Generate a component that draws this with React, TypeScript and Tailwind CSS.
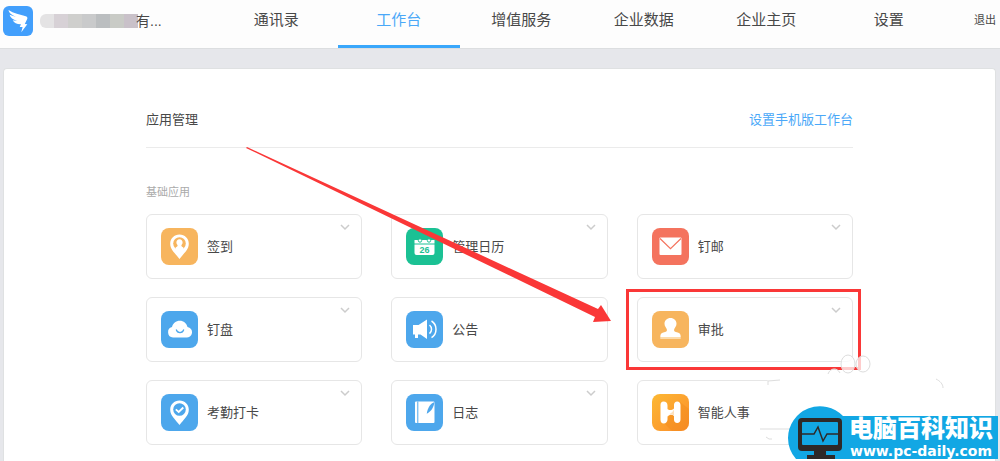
import React from "react";

interface AppItem {
  name: string;
  color: string;
  icon: React.ReactNode;
  highlighted?: boolean;
}

const PIN =
  "M18.5 6.5c-5.3 0-9.3 4-9.3 9.2 0 6 5.3 9.8 9.3 15.3 4-5.5 9.3-9.3 9.3-15.3 0-5.2-4-9.2-9.3-9.2z";

const CheckinIcon = () => (
  <>
    <path d={PIN} fill="#fff" />
    <circle cx="18.5" cy="15.5" r="6.3" fill="#f7b55e" />
    <path
      d="M18.5 11.2c-1.9 0-3.1 1.4-3.1 3.1 0 1.3.6 2.1 1.2 2.9.2 1.2-.8 1.6-2 2.3v3h7.8v-3c-1.2-.7-2.2-1.1-2-2.3.6-.8 1.2-1.6 1.2-2.9 0-1.7-1.2-3.1-3.1-3.1z"
      fill="#fff"
    />
  </>
);

const CalendarIcon = () => (
  <>
    <path d="M8.5 12h20v3.500h-20z" fill="#fff" />
    <path d="M8.5 16.500h20V25a2 2 0 0 1-2 2h-16a2 2 0 0 1-2-2z" fill="#fff" />
    <circle cx="14" cy="12.500" r="1.700" fill="#fff" stroke="#1bc194" />
    <circle cx="23" cy="12.500" r="1.700" fill="#fff" stroke="#1bc194" />
    <text
      x="18.5"
      y="24.5"
      textAnchor="middle"
      fontSize="9"
      fontWeight="700"
      fontFamily="Liberation Sans, sans-serif"
      fill="#1bc194"
    >
      26
    </text>
  </>
);

const MailIcon = () => (
  <>
    <rect x="7.5" y="9.5" width="22" height="17.5" rx="1" fill="#fff" />
    <path d="M8 10.5l10.5 10.2L29 10.5" fill="none" stroke="#f4735e" strokeWidth="1.2" />
  </>
);

const CloudIcon = () => (
  <>
    <path
      d="M12 26.5a5.3 5.3 0 0 1-1-10.4c.8-3.9 4-6.4 7.8-6.4s6.9 2.5 7.7 6.3A5.3 5.3 0 0 1 25 26.5z"
      fill="#fff"
    />
    <path
      d="M15.2 18.5c.6 2 1.9 3.1 3.800 3.100s3.200-1.100 3.800-3.100"
      fill="none"
      stroke="#4da7ec"
      strokeWidth="1.2"
    />
  </>
);

const NoticeIcon = () => (
  <>
    <path d="M7 14h5.5L21 8.5V28l-6.5-4.5H12V27H9v-3.5H7z" fill="#fff" />
    <path
      d="M23.5 14c2.7 2.3 2.7 6.3 0 8.6M25.5 10c6 3.6 6 13 0 16.6"
      fill="none"
      stroke="#fff"
      strokeWidth="1.5"
    />
  </>
);

const StampIcon = () => (
  <>
    <path
      d="M18.5 7c-3.500 0-6 2.500-6 5.800 0 2.500 1.700 3.700 2.300 5.400.7 2-.8 2.600-3.500 3.300-1.900.5-3 1.300-3 4.500h20.400c0-3.200-1.100-4-3-4.500-2.700-.7-4.200-1.300-3.500-3.300.6-1.700 2.300-2.900 2.300-5.400 0-3.300-2.500-5.800-6-5.800z"
      fill="#fff"
    />
    <path d="M8.3 26h20.4v2H8.300z" fill="#fbdcae" />
  </>
);

const AttendanceIcon = () => (
  <>
    <path d={PIN} fill="#fff" />
    <circle cx="18.5" cy="15.5" r="6.3" fill="#4da7ec" />
    <path d="M14.8 15.3l2.9 2.7 4.6-4.5" fill="none" stroke="#fff" strokeWidth="1.8" />
  </>
);

const LogIcon = () => (
  <>
    <rect x="9" y="7.5" width="19.5" height="21.5" rx="1" fill="#fff" />
    <path d="M11.8 7.5V29" stroke="#4da7ec" strokeWidth="1" />
    <path d="M28.500 8c-4 1.500-6.800 5.500-7.800 11.800l1.300-.8c3.600-2.300 5.500-5.500 6.500-11z" fill="#4da7ec" />
  </>
);

const HrIcon = () => (
  <>
    <path d="M12 29l8 8h17V15l-9-7z" fill="#f08a18" opacity=".4" />
    <path
      d="M11.5 7.5c2.5 0 4 1.5 4 4V15c1.3 1.3 4 1.8 6.500-.5V11c0-2.300 1.300-3.500 3.200-3.500s3.300 1.200 3.300 3.500v14.500c0 2.300-1.300 3.500-3.300 3.500S22 27.800 22 25.500V22c-2-1.700-4.500-1.500-6.500.5v3c0 2.300-1.500 4-3.700 4s-3.300-1.500-3.300-3.700V11c0-2.200 1-3.500 3-3.500z"
      fill="#fff"
    />
    <path d="M15.5 20.5c3-.3 5.300-2.200 6.500-5.500v6.500c-2-1.500-4.300-1.500-6.500-1z" fill="#fde0bd" />
  </>
);

const apps: AppItem[] = [
  { name: "签到", color: "bg-[#f7b55e]", icon: <CheckinIcon /> },
  { name: "管理日历", color: "bg-[#1bc194]", icon: <CalendarIcon /> },
  { name: "钉邮", color: "bg-[#f4735e]", icon: <MailIcon /> },
  { name: "钉盘", color: "bg-[#4da7ec]", icon: <CloudIcon /> },
  { name: "公告", color: "bg-[#4da7ec]", icon: <NoticeIcon /> },
  { name: "审批", color: "bg-[#f7b55e]", icon: <StampIcon />, highlighted: true },
  { name: "考勤打卡", color: "bg-[#4da7ec]", icon: <AttendanceIcon /> },
  { name: "日志", color: "bg-[#4da7ec]", icon: <LogIcon /> },
  { name: "智能人事", color: "bg-linear-to-br from-[#fcb833] to-[#fb8c2c]", icon: <HrIcon /> },
];

const tabs = ["通讯录", "工作台", "增值服务", "企业数据", "企业主页", "设置"];

const mosaic = [
  "bg-[#e4e3e4]",
  "bg-[#d7d1d6]",
  "bg-[#cfcfcd]",
  "bg-[#c9cacb]",
  "bg-[#bbbec0]",
  "bg-[#c9cbc6]",
  "bg-[#c9c1c9]",
];

const Header = () => (
  <header className="flex h-[49px] shrink-0 border-b border-[#dcdee0] bg-[#fdfdfd]">
    <div className="flex h-10 w-[215px] shrink-0 items-center pl-[3px] pt-[2px]">
      <svg viewBox="0 0 30 30" className="size-[30px] shrink-0" aria-hidden="true">
        <rect width="30" height="30" rx="6" fill="#429ffc" />
        <path
          d="M5.5 4c5 3.5 11.500 4.500 17.300 6.200 1.700.6 1.900 1.800 1.300 3.100L21.800 18l2.500.2-6 8 1.300-5.300-2.900.1 1.300-2.800c-4.200.1-6.800-1.500-8.300-4l4.300.7c-4-1.200-6.700-3-7.400-6.100l6.500 2.300C9 8.900 6.200 7.500 5.500 4z"
          fill="#fff"
        />
      </svg>
      <div className="ml-[7px] flex h-[14px] w-[98px] overflow-hidden rounded-l-md">
        {mosaic.map((c) => (
          <span key={c} className={`flex-1 ${c}`} />
        ))}
      </div>
      <span className="-ml-[2px] text-sm">有...</span>
    </div>
    <nav className="grid flex-1 grid-cols-6">
      {tabs.map((tab) => (
        <a
          key={tab}
          href="#"
          className={
            tab === "工作台"
              ? "border-b-[3px] border-[#3aa7fb] text-center text-[15px] leading-10 text-[#4aa8f8]"
              : "border-b-[3px] border-transparent text-center text-[15px] leading-10"
          }
        >
          {tab}
        </a>
      ))}
    </nav>
    <a href="#" className="w-[50px] shrink-0 pr-1 text-right text-[11px] leading-10">
      退出
    </a>
  </header>
);

const AppCard: React.FC<{ app: AppItem }> = ({ app }) => (
  <div className="relative flex h-[65px] items-center rounded-md border border-[#e6e6e6] pl-3.5">
    <a href="#" className="flex items-center gap-[9px] text-[13px]">
      <span className={`size-[37px] overflow-hidden rounded-lg ${app.color}`}>
        <svg viewBox="0 0 37 37" className="size-full" aria-hidden="true">
          {app.icon}
        </svg>
      </span>
      {app.name}
    </a>
    <button type="button" aria-label={`${app.name}选项`} className="absolute right-[11px] top-[9px]">
      <svg viewBox="0 0 10 7" className="h-[7px] w-[10px]" fill="none" stroke="#ccc" strokeWidth="1.5">
        <path d="M1 1l4 4 4-4" />
      </svg>
    </button>
    {app.highlighted && (
      <div className="pointer-events-none absolute -bottom-[9px] -left-3 -right-[9px] -top-[9px] border-[3px] border-[#fa3737]" />
    )}
  </div>
);

const Watermark = () => (
  <div className="pointer-events-none absolute bottom-0 right-0 h-[110px] w-[245px]">
    <svg viewBox="0 0 245 110" className="absolute inset-0 size-full" aria-hidden="true">
      {/* faded patch, paw print */}
      <path d="M13 28c18-5 48-7 68-7h90c10 2 16 9 17 16v60H60V84H5z" fill="#fff" />
      <g fill="#fff" fillOpacity=".75" stroke="#ddd">
        <ellipse cx="93" cy="13" rx="7" ry="9" />
        <ellipse cx="108" cy="13" rx="7" ry="8" />
        <path d="M73 23c2-6 9-7 12-1" />
      </g>
      <path d="M13 34v-4l12-1M181 28c4 2 7 5 7 9M5 78h30M11 86l3 2h3" fill="none" stroke="#ddd" />
      {/* badge */}
      <path d="M41 108A32 32 0 0 1 33 87A32 32 0 0 1 88 65H243V108z" fill="#12a7e4" />
      <rect x="43" y="67" width="44" height="33" rx="4" fill="#2e2928" />
      <rect x="47" y="71" width="36" height="23" rx="1" fill="#12a7e4" />
      <path d="M47 83h12l4-7 5 14 4-7h11" fill="none" stroke="#2e2928" strokeWidth="1.5" />
      <path d="M59 100h12v4h9v4H52v-4h7z" fill="#2e2928" />
    </svg>
    <div className="absolute bottom-[2px] right-1 flex w-[150px] flex-col items-center text-white">
      <span className="text-2xl font-black leading-7">电脑百科知识</span>
      <span className="font-['DejaVu_Sans',sans-serif] text-sm font-bold leading-4">
        www.pc-daily.com
      </span>
    </div>
  </div>
);

export default function App() {
  return (
    <div className="relative flex min-h-screen flex-col overflow-hidden bg-[#e6e7eb] font-['Liberation_Sans','Noto_Sans_CJK_SC',sans-serif] text-[#484848]">
      <Header />
      <main className="ml-[3px] mr-1 mt-[19px] flex-1 rounded-t border border-b-0 border-[#dfe1e2] bg-white pb-4 pt-[41px]">
        <div className="relative mx-auto w-[707px] max-w-full">
          <div className="flex items-center justify-between border-b border-[#ebebeb] pb-[17px] text-[13px] leading-5">
            <h1>应用管理</h1>
            <a href="#" className="text-[#4aa8f8]">
              设置手机版工作台
            </a>
          </div>
          <h2 className="mt-9 text-[11px] leading-4 text-[#aaa]">基础应用</h2>
          <div className="mt-3.5 grid grid-cols-3 gap-x-[29px] gap-y-[18px]">
            {apps.map((app) => (
              <AppCard key={app.name} app={app} />
            ))}
          </div>
          <svg
            viewBox="0 0 366 176"
            className="pointer-events-none absolute left-[100px] top-[37px] h-[176px] w-[366px]"
            aria-hidden="true"
          >
            <path d="M1 0L352 162l3-4 10 16-18 1 2-5L0 1z" fill="#fa3737" />
          </svg>
        </div>
      </main>
      <Watermark />
    </div>
  );
}
